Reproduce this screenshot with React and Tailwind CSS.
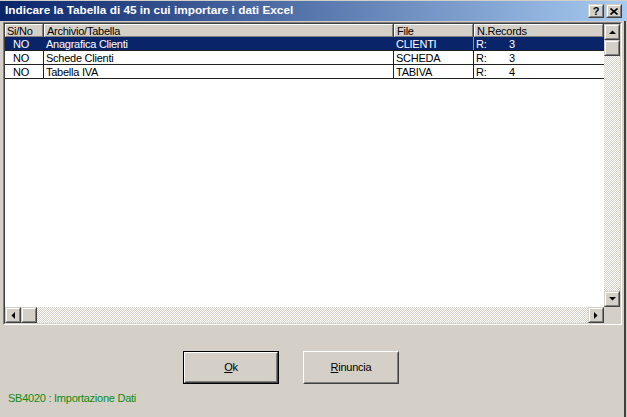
import React from "react";

const rows = [
  { sn: "NO", name: "Anagrafica Clienti", file: "CLIENTI", n: "3", sel: true },
  { sn: "NO", name: "Schede Clienti", file: "SCHEDA", n: "3" },
  { sn: "NO", name: "Tabella IVA", file: "TABIVA", n: "4" },
];

function Raised({ className = "", children }) {
  return (
    <div className={"border border-t-[#d4d0c8] border-l-[#d4d0c8] border-r-[#404040] border-b-[#404040] bg-[#d4d0c8] " + className}>
      <div className="w-full h-full border border-t-white border-l-white border-r-[#808080] border-b-[#808080] flex items-center justify-center">
        {children}
      </div>
    </div>
  );
}

function Arrow({ dir }) {
  const pts = {
    up: "0,4 7,4 3.5,0.5",
    down: "0,0 7,0 3.5,3.5",
    left: "4,0 4,7 0.5,3.5",
    right: "0,0 0,7 3.5,3.5",
  }[dir];
  const vertical = dir === "up" || dir === "down";
  return (
    <svg width={vertical ? 7 : 4} height={vertical ? 4 : 7} viewBox={vertical ? "0 0 7 4" : "0 0 4 7"}>
      <polygon points={pts} fill="#000" />
    </svg>
  );
}

const track = "bg-[repeating-conic-gradient(#d4d0c8_0_25%,#ffffff_0_50%)] bg-[length:2px_2px]";

function HeaderCell({ w, children }) {
  return (
    <div className={"h-[13px] border-r border-r-[#404040] bg-[#d4d0c8] " + w}>
      <div className="h-full border-t border-l border-t-white border-l-white border-b border-b-[#808080] border-r border-r-[#808080] pl-[1px] leading-[12px] text-black whitespace-nowrap overflow-hidden">
        {children}
      </div>
    </div>
  );
}

export default function App() {
  return (
    <div className="w-[627px] h-[417px] bg-[#d4d0c8] overflow-hidden flex flex-col font-['Liberation_Sans',Arial,sans-serif] text-[11px] tracking-[-0.25px]">
      {/* title bar */}
      <div className="mt-[1px] h-[20px] shrink-0 flex items-center justify-between pl-[5px] pr-[5px] bg-[linear-gradient(to_right,#0a246a,#a6caf0)]">
        <div className="text-white font-bold text-[11.8px] tracking-[0px] leading-none whitespace-nowrap">
          Indicare la Tabella di 45 in cui importare i dati Excel
        </div>
        <div className="flex gap-[2px]">
          <Raised className="w-[16px] h-[14px]">
            <span className="font-bold text-[11px] leading-none text-black">?</span>
          </Raised>
          <Raised className="w-[16px] h-[14px]">
            <svg width="8" height="7" viewBox="0 0 8 7">
              <path d="M0.5 0.5 L7.5 6.5 M7.5 0.5 L0.5 6.5" stroke="#000" strokeWidth="1.6" />
            </svg>
          </Raised>
        </div>
      </div>

      {/* body */}
      <div className="flex-1 w-[626px] border-r-2 border-r-[#404040] flex flex-col pt-[1px]">
        {/* list view */}
        <div className="ml-[3px] w-[619px] h-[303px] border border-t-[#808080] border-l-[#808080] border-r-white border-b-white">
          <div className="w-full h-full border border-t-[#404040] border-l-[#404040] border-r-[#d4d0c8] border-b-[#d4d0c8] bg-white flex flex-col">
            <div className="flex flex-1 min-h-0">
              {/* content */}
              <div className="w-[599px] flex flex-col">
                <div className="flex">
                  <HeaderCell w="w-[39px]">Si/No</HeaderCell>
                  <HeaderCell w="w-[350px]"><span className="pl-[1px]">Archivio/Tabella</span></HeaderCell>
                  <HeaderCell w="w-[80px]"><span className="pl-[1px]">File</span></HeaderCell>
                  <HeaderCell w="w-[130px]"><span className="pl-[1px]">N.Records</span></HeaderCell>
                </div>
                {rows.map((r, i) => (
                  <div
                    key={i}
                    className={
                      "flex h-[14px] leading-[14px] border-b border-b-[#202020] " +
                      (r.sel ? "bg-[#0a246a] text-white" : "bg-white text-black")
                    }
                  >
                    <div className={"w-[39px] pl-[8px] border-r " + (r.sel ? "border-r-[#0a246a]" : "border-r-[#202020]")}>{r.sn}</div>
                    <div className={"w-[350px] pl-[2px] border-r " + (r.sel ? "border-r-[#0a246a]" : "border-r-[#202020]")}>{r.name}</div>
                    <div className={"w-[80px] pl-[2px] border-r " + (r.sel ? "border-r-[#8a94b8]" : "border-r-[#202020]")}>{r.file}</div>
                    <div className="w-[130px] pl-[2px] flex">
                      <span className="w-[33px]">R:</span>
                      <span>{r.n}</span>
                    </div>
                  </div>
                ))}
              </div>
              {/* vertical scrollbar */}
              <div className={"w-[16px] flex flex-col " + track}>
                <Raised className="w-[16px] h-[16px] shrink-0"><Arrow dir="up" /></Raised>
                <Raised className="w-[16px] h-[16px] shrink-0" />
                <div className="flex-1" />
                <Raised className="w-[16px] h-[16px] shrink-0"><Arrow dir="down" /></Raised>
              </div>
            </div>
            {/* horizontal scrollbar */}
            <div className="flex h-[16px] shrink-0">
              <div className={"w-[599px] flex " + track}>
                <Raised className="w-[16px] h-[16px] shrink-0"><Arrow dir="left" /></Raised>
                <Raised className="w-[16px] h-[16px] shrink-0" />
                <div className="flex-1" />
                <Raised className="w-[16px] h-[16px] shrink-0"><Arrow dir="right" /></Raised>
              </div>
              <div className="w-[16px] bg-[#d4d0c8]" />
            </div>
          </div>
        </div>

        {/* buttons */}
        <div className="flex gap-[24px] pl-[183px] mt-[26px]">
          <div className="w-[96px] h-[33px] border border-black">
            <div className="w-full h-full border border-t-white border-l-white border-r-[#404040] border-b-[#404040]">
              <div className="w-full h-full border border-t-[#d4d0c8] border-l-[#d4d0c8] border-r-[#808080] border-b-[#808080] flex items-center justify-center text-black">
                <span><span className="underline">O</span>k</span>
              </div>
            </div>
          </div>
          <div className="w-[96px] h-[33px] border border-t-white border-l-white border-r-[#404040] border-b-[#404040]">
            <div className="w-full h-full border border-t-[#d4d0c8] border-l-[#d4d0c8] border-r-[#808080] border-b-[#808080] flex items-center justify-center text-black">
              <span><span className="underline">R</span>inuncia</span>
            </div>
          </div>
        </div>

        {/* status */}
        <div className="pl-[8px] mt-[8px] leading-[13px] text-[#108a10]">SB4020 : Importazione Dati</div>
      </div>
    </div>
  );
}
